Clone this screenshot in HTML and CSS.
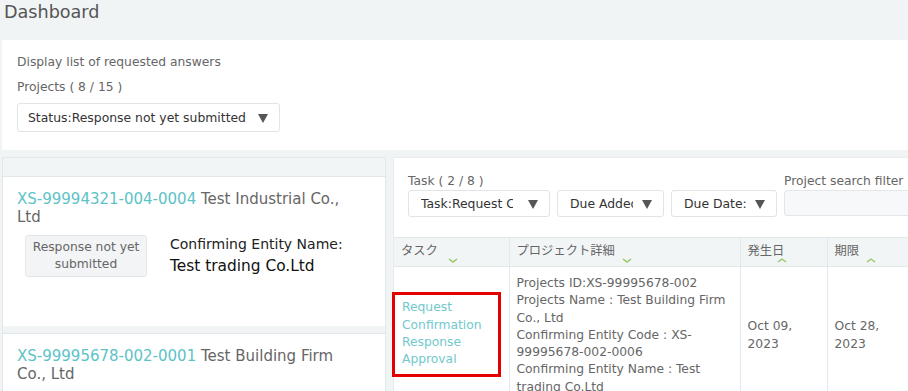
FILE: index.html
```html
<!DOCTYPE html>
<html>
  <head>
    <meta charset="utf-8">
    <title>Dashboard</title>
    <link rel="stylesheet" href="styles.css">
  </head>
  <body>
    <h1 class="page-title">Dashboard</h1>
    <div class="wrap">
      <section class="summary">
        <p>Display list of requested answers</p>
        <p>Projects ( 8 / 15 )</p>
        <div class="select select-status"><span>Status:Response not yet submitted</span></div>
      </section>
      <div class="main">
        <aside class="projects">
          <div class="projects-head"></div>
          <div class="project-card">
            <p class="project-title"><a>XS-99994321-004-0004</a> Test Industrial Co., Ltd</p>
            <div class="project-body">
              <span class="badge">Response not yet submitted</span>
              <div class="entity">
                <p class="entity-label">Confirming Entity Name:</p>
                <p class="entity-name">Test trading Co.Ltd</p>
              </div>
            </div>
          </div>
          <div class="project-card">
            <p class="project-title"><a>XS-99995678-002-0001</a> Test Building Firm Co., Ltd</p>
          </div>
        </aside>
        <section class="tasks">
          <div class="task-filters">
            <div class="field">
              <label>Task ( 2 / 8 )</label>
              <div class="select select-task"><span>Task:Request Confirmation</span></div>
            </div>
            <div class="select select-added"><span>Due Added</span></div>
            <div class="select select-due"><span>Due Date:</span></div>
            <div class="field">
              <label>Project search filter</label>
              <div class="search"></div>
            </div>
          </div>
          <table class="task-table">
            <colgroup>
              <col class="c-task">
              <col class="c-detail">
              <col class="c-date">
              <col class="c-date">
              <col class="c-rest">
            </colgroup>
            <thead>
              <tr>
                <th>タスク<span class="sort sort-wide"><svg viewBox="0 0 10 5"><polyline points="1,1 5,4 9,1"/></svg></span></th>
                <th>プロジェクト詳細<span class="sort"><svg viewBox="0 0 10 5"><polyline points="1,1 5,4 9,1"/></svg></span></th>
                <th>発生日<span class="sort sort-tight"><svg viewBox="0 0 10 5"><polyline points="1,4 5,1 9,4"/></svg></span></th>
                <th>期限<span class="sort"><svg viewBox="0 0 10 5"><polyline points="1,4 5,1 9,4"/></svg></span></th>
                <th></th>
              </tr>
            </thead>
            <tbody>
              <tr>
                <td class="task-cell">
                  <div class="highlight">
                    <a>Request Confirmation</a>
                    <a>Response Approval</a>
                  </div>
                </td>
                <td class="detail-cell">
                  Projects ID:XS-99995678-002<br>
                  Projects Name : Test Building Firm Co., Ltd<br>
                  Confirming Entity Code : XS-99995678-002-0006<br>
                  Confirming Entity Name : Test trading Co.Ltd
                </td>
                <td>Oct 09, 2023</td>
                <td>Oct 28, 2023</td>
                <td></td>
              </tr>
            </tbody>
          </table>
        </section>
      </div>
    </div>
  </body>
</html>
```

FILE: styles.css
```css
body {
  margin: 0;
  background: #f1f4f5;
  font-family: "DejaVu Sans", "Noto Sans CJK JP", sans-serif;
  font-size: 12.3px;
  color: #666;
  overflow: hidden;
}
p {
  margin: 0;
}
a {
  color: #5cc3c7;
}
.page-title {
  margin: 0;
  height: 40px;
  padding-left: 4px;
  font-size: 17.6px;
  font-weight: normal;
  line-height: 24px;
  color: #555;
}
.wrap {
  margin-left: 2px;
}
.summary {
  height: 110px;
  box-sizing: border-box;
  padding: 13px 15px 0;
  background: #fff;
}
.summary p {
  margin-bottom: 7px;
  line-height: 18px;
}
.select {
  position: relative;
  box-sizing: border-box;
  height: 27px;
  padding: 0 30px 0 12px;
  border: 1px solid #dfe4e8;
  border-radius: 3px;
  background: #fff;
  color: #333;
  font-size: 12.4px;
  line-height: 25px;
  white-space: nowrap;
}
.select span {
  display: block;
  overflow: hidden;
}
.select::after {
  content: "";
  position: absolute;
  right: 11px;
  top: 50%;
  margin-top: -4px;
  border-left: 5.5px solid transparent;
  border-right: 5.5px solid transparent;
  border-top: 9px solid #555;
}
.select-status {
  width: 263px;
  height: 29px;
  padding-left: 10px;
  line-height: 27px;
}
.main {
  display: flex;
  gap: 7px;
  margin-top: 7px;
}
.projects {
  flex: none;
  width: 384px;
  box-sizing: border-box;
  border: 1px solid #e2e7ea;
  border-bottom: 0;
}
.projects-head {
  height: 18px;
  background: #f2f5f6;
  border-bottom: 1px solid #e2e7ea;
}
.project-card {
  height: 149px;
  box-sizing: border-box;
  padding: 13px 40px 0 14px;
  background: #fff;
}
.project-card + .project-card {
  margin-top: 7px;
  border-top: 1px solid #e2e7ea;
}
.project-title {
  font-size: 15px;
  line-height: 18px;
}
.project-body {
  display: flex;
  align-items: flex-start;
  gap: 23px;
  margin-top: 9px;
  padding-left: 8px;
}
.badge {
  flex: none;
  width: 122px;
  box-sizing: border-box;
  padding: 3px 6px;
  border: 1px solid #e3e7ea;
  border-radius: 3px;
  background: #f2f4f5;
  text-align: center;
  line-height: 17px;
}
.entity {
  flex: none;
  margin-top: -1px;
  color: #222;
}
.entity-label {
  font-size: 14px;
  line-height: 20px;
}
.entity-name {
  font-size: 15.4px;
  line-height: 24px;
  color: #111;
}
.tasks {
  flex: 1 0 620px;
  background: #fff;
  border-left: 1px solid #e8ecee;
  border-top: 1px solid #e8ecee;
}
.task-filters {
  display: flex;
  align-items: flex-end;
  gap: 7px;
  padding: 14px 14px 20px;
}
.field label {
  display: block;
  line-height: 18px;
  white-space: nowrap;
}
.select-task {
  width: 142px;
  padding-right: 36px;
}
.select-added {
  width: 107px;
}
.select-due {
  width: 106px;
}
.search {
  width: 220px;
  height: 26px;
  box-sizing: border-box;
  margin-bottom: 1px;
  border: 1px solid #e3e7ea;
  border-radius: 3px;
  background: #f6f8f9;
}
.task-table {
  width: 620px;
  table-layout: fixed;
  border-collapse: collapse;
}
.c-task {
  width: 115px;
}
.c-detail {
  width: 231px;
}
.c-date {
  width: 87px;
}
.task-table th {
  height: 29px;
  box-sizing: border-box;
  padding: 4px 7px 0;
  border: 1px solid #e3e8ea;
  border-left: 0;
  background: #f2f5f6;
  font-weight: normal;
  text-align: left;
  vertical-align: top;
  line-height: 18px;
  white-space: nowrap;
}
.sort {
  display: inline-block;
  width: 10px;
  height: 5px;
  margin-left: 7px;
  vertical-align: -8px;
}
.sort svg {
  display: block;
  width: 10px;
  height: 5px;
  fill: none;
  stroke: #93c960;
  stroke-width: 1.4;
}
.sort-wide {
  margin-left: 10px;
}
.sort-tight {
  margin-left: -7px;
}
.task-table td {
  padding: 8px 7px 6px;
  border-right: 1px solid #e3e8ea;
  vertical-align: middle;
  line-height: 17.3px;
}
.task-table td.task-cell {
  padding: 0;
}
.highlight {
  width: 109px;
  box-sizing: border-box;
  margin-left: -2px;
  padding: 4px 7px 5px;
  border: 3px solid #e50000;
}
.highlight a {
  display: block;
  color: #71c9cd;
}
```
